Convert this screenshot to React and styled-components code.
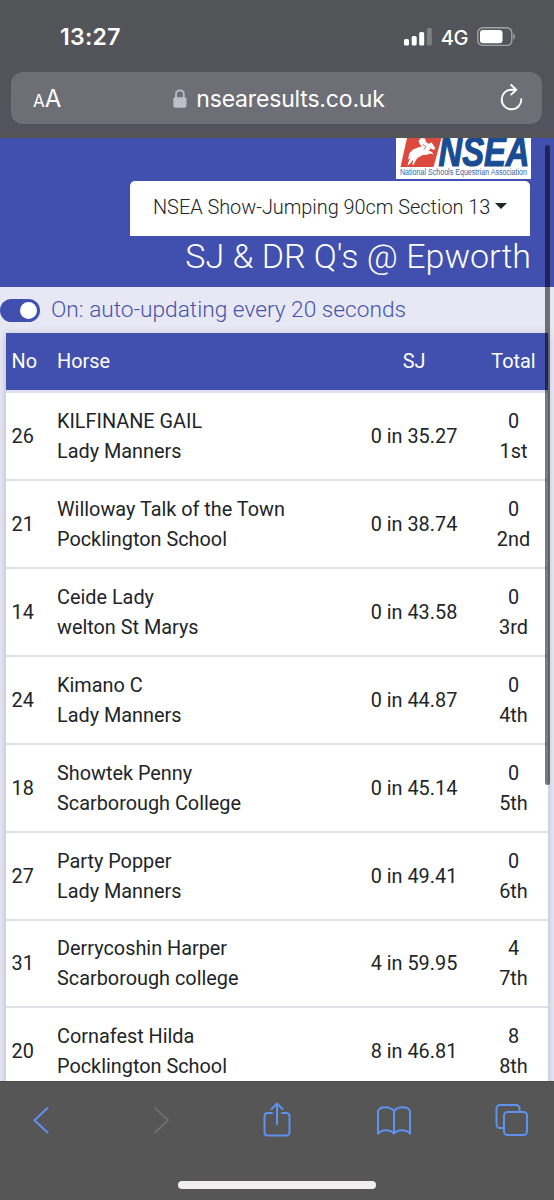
import styled, { createGlobalStyle } from "styled-components";

const GlobalStyle = createGlobalStyle`
  * {
    box-sizing: border-box;
  }
  body {
    margin: 0;
    overflow: hidden;
    font-family: Roboto, sans-serif;
  }
`;

const Phone = styled.div`
  width: 554px;
  height: 1200px;
  display: flex;
  flex-direction: column;
  overflow: hidden;
  background-color: #e8e8f4;
`;

/* browser chrome */
const TopChrome = styled.div`
  flex: none;
  height: 138px;
  padding: 0 12px 0 11px;
  background: linear-gradient(#545559 0%, #535459 55%, #53535f 92%, #555558 97%);
  color: #fff;
  font-family: Inter, sans-serif;
`;

const StatusBar = styled.div`
  height: 72px;
  padding: 2px 26px 0 49px;
  display: flex;
  align-items: center;
  justify-content: space-between;
`;

const Clock = styled.span`
  font-size: 23px;
  font-weight: 600;
  letter-spacing: 0.3px;
`;

const StatusIcons = styled.div`
  display: flex;
  align-items: center;
`;

const Network = styled.span`
  margin: 0 9px;
  padding-top: 1px;
  font-size: 20px;
  font-weight: 500;
  letter-spacing: -0.4px;
`;

const AddressBar = styled.div`
  height: 52px;
  padding: 0 19px 0 22px;
  display: flex;
  align-items: center;
  justify-content: space-between;
  border-radius: 12px;
  background-color: #6e6e76;
`;

const TextSize = styled.span`
  width: 26px;
  padding-top: 1px;
  font-size: 24px;
  white-space: nowrap;

  small {
    font-size: 17px;
  }
`;

const Address = styled.div`
  padding-top: 1px;
  display: flex;
  align-items: center;
  gap: 9px;
  font-size: 23px;
  letter-spacing: -0.18px;
`;

const BottomChrome = styled.div`
  flex: none;
  height: 119px;
  display: flex;
  flex-direction: column;
  align-items: center;
  justify-content: space-between;
  padding-bottom: 11px;
  background-color: #565657;
  border-top: 1px solid #4c4c50;
`;

const Toolbar = styled.div`
  width: 100%;
  height: 76px;
  padding: 0 25px 0 24px;
  display: flex;
  align-items: center;
  justify-content: space-between;
`;

const HomeIndicator = styled.div`
  width: 198px;
  height: 8px;
  border-radius: 4px;
  background-color: #f0eeef;
`;

/* page */
const Page = styled.main`
  position: relative;
  flex: 1;
  min-height: 0;
  overflow: hidden;
`;

const Scrollbar = styled.div`
  position: absolute;
  top: 7px;
  right: 4px;
  width: 5px;
  height: 640px;
  border-radius: 3px;
  background-color: rgba(0, 0, 0, 0.52);
`;

const Header = styled.header`
  height: 149px;
  padding-right: 24px;
  display: flex;
  flex-direction: column;
  align-items: flex-end;
  background-color: #4150ae;
`;

const LogoBox = styled.div`
  width: 135px;
  height: 41px;
  margin-right: -1px;
  background-color: #fff;

  svg {
    display: block;
  }
`;

const SectionSelect = styled.button`
  width: 400px;
  height: 55px;
  margin-top: 2px;
  padding: 0 23px 3px 23px;
  display: flex;
  align-items: center;
  justify-content: space-between;
  border: 0;
  border-radius: 5px 5px 0 0;
  background-color: #fff;
  color: #212529;
  font-family: inherit;
  font-size: 19.9px;
  font-weight: 300;
  letter-spacing: -0.02px;
  white-space: nowrap;
`;

const Caret = styled.span`
  border-top: 6px solid #212529;
  border-left: 6px solid transparent;
  border-right: 6px solid transparent;
  margin-top: -3px;
`;

const Title = styled.h1`
  margin: 0 -1px 0 0;
  font-size: 34px;
  font-weight: 300;
  line-height: 40px;
  color: #fff;
  white-space: nowrap;
`;

const UpdateBar = styled.div`
  height: 46px;
  display: flex;
  align-items: center;
  gap: 11px;
  color: #4654ab;
  font-size: 22.7px;
  font-weight: 300;
  line-height: 26px;
  white-space: nowrap;
`;

const Switch = styled.span`
  width: 40px;
  height: 23px;
  padding: 3px;
  display: flex;
  justify-content: flex-end;
  border-radius: 12px;
  background-color: #4150ae;

  &::after {
    content: "";
    width: 17px;
    height: 17px;
    border-radius: 50%;
    background-color: #fff;
  }
`;

const Results = styled.div`
  margin: 0 6px;
  background-color: #fff;
  color: #212529;
  font-size: 19.85px;
  line-height: 30px;
  box-shadow: 0 2px 8px rgba(40, 40, 90, 0.28);
`;

const Row = styled.div`
  height: 87.93px;
  padding: 2px 0 0 5.5px;
  display: grid;
  grid-template-columns: 45.5px 1fr 130px 69px;
  align-items: center;
  border-bottom: 2px solid #dee2e6;
`;

const HeadRow = styled(Row)`
  height: 60px;
  padding-top: 1px;
  background-color: #4150ae;
  color: #fff;
  border-bottom: 3px solid #dfe1f1;
`;

const Cell = styled.div`
  text-align: ${({ $center }) => ($center ? "center" : "left")};
  white-space: nowrap;
`;

const rows = [
  { no: 26, horse: "KILFINANE GAIL", school: "Lady Manners", sj: "0 in 35.27", total: 0, place: "1st" },
  { no: 21, horse: "Willoway Talk of the Town", school: "Pocklington School", sj: "0 in 38.74", total: 0, place: "2nd" },
  { no: 14, horse: "Ceide Lady", school: "welton St Marys", sj: "0 in 43.58", total: 0, place: "3rd" },
  { no: 24, horse: "Kimano C", school: "Lady Manners", sj: "0 in 44.87", total: 0, place: "4th" },
  { no: 18, horse: "Showtek Penny", school: "Scarborough College", sj: "0 in 45.14", total: 0, place: "5th" },
  { no: 27, horse: "Party Popper", school: "Lady Manners", sj: "0 in 49.41", total: 0, place: "6th" },
  { no: 31, horse: "Derrycoshin Harper", school: "Scarborough college", sj: "4 in 59.95", total: 4, place: "7th" },
  { no: 20, horse: "Cornafest Hilda", school: "Pocklington School", sj: "8 in 46.81", total: 8, place: "8th" },
];

const Signal = () => (
  <svg width="28" height="18" viewBox="0 0 28 18" fill="#fff">
    <rect x="0" y="11" width="5" height="6.5" rx="1.5" />
    <rect x="7.7" y="8" width="5" height="9.5" rx="1.5" />
    <rect x="15.2" y="4" width="5" height="13.5" rx="1.5" />
    <rect x="22.8" y="0" width="5" height="17.5" rx="1.5" opacity="0.25" />
  </svg>
);

const Battery = () => (
  <svg width="39" height="20" viewBox="0 0 39 20">
    <rect x="0.8" y="0.8" width="34" height="17.6" rx="5" fill="none" stroke="#a2a2a7" strokeWidth="1.4" />
    <rect x="3" y="3" width="22.5" height="13.2" rx="3" fill="#fff" />
    <path d="M36.4 6.8c2.2.8 2.2 5 0 5.8z" fill="#a2a2a7" />
  </svg>
);

const Lock = () => (
  <svg width="14" height="20" viewBox="0 0 14 20">
    <rect x="0.3" y="8.3" width="13.2" height="10.5" rx="2" fill="#bebec9" />
    <path d="M3 9V5.2a3.9 3.9 0 0 1 7.8 0V9" fill="none" stroke="#bebec9" strokeWidth="1.8" />
  </svg>
);

const Reload = () => (
  <svg width="24" height="28" viewBox="0 0 24 28" fill="none" stroke="#fff" strokeWidth="1.9" strokeLinecap="round" strokeLinejoin="round">
    <path d="M16.6 5.7H12.3A9.8 9.8 0 1 0 22.3 15.3" />
    <path d="M12.2 1l5 4.7-5 4.9" />
  </svg>
);

const Logo = () => (
  <svg width="135" height="41" viewBox="0 0 135 41">
    <path d="M11 0H45.5L37.5 29H4.5z" fill="#dc4a3f" />
    <path
      d="M22.5 3L25 0L29 0.5L30 4L33 6L34.5 4.5L36 5L39.3 10.3L38 12L35 10.5L32.5 12.5L36 14L37.5 16.5L34 15.5L31 16.8L27 17L22 19.5L20 22L17.5 27L16.3 26.5L17.3 21.5L14.5 25L11.5 27.8L12.8 23L14.5 19.5L12 21.5L13.5 15L17 11.5L22 9.5L25.5 8.5L23.5 5.5z"
      fill="#fff"
    />
    <path d="M26.5 6.5L30 8.5L28 11.5" fill="none" stroke="#dc4a3f" strokeWidth="0.8" />
    <g fill="#194c92" fontFamily="Liberation Sans, sans-serif">
      <text x="42.5" y="28.2" fontSize="42" fontWeight="700" fontStyle="italic" textLength="91" lengthAdjust="spacingAndGlyphs" stroke="#194c92" strokeWidth="1.2">
        NSEA
      </text>
      <text x="4" y="37.4" fontSize="9.2" fill="#3763a3" textLength="127" lengthAdjust="spacingAndGlyphs">
        National Schools Equestrian Association
      </text>
    </g>
  </svg>
);

const ToolIcon = ({ color = "#5f91ee", children }) => (
  <svg width="34" height="38" viewBox="0 0 34 38" fill="none" stroke={color} strokeWidth="2" strokeLinecap="round" strokeLinejoin="round">
    {children}
  </svg>
);

const App = () => {
  return (
    <Phone>
      <GlobalStyle />
      <TopChrome>
        <StatusBar>
          <Clock>13:27</Clock>
          <StatusIcons>
            <Signal />
            <Network>4G</Network>
            <Battery />
          </StatusIcons>
        </StatusBar>
        <AddressBar>
          <TextSize>
            <small>A</small>A
          </TextSize>
          <Address>
            <Lock />
            nsearesults.co.uk
          </Address>
          <Reload />
        </AddressBar>
      </TopChrome>

      <Page>
        <Header>
          <LogoBox>
            <Logo />
          </LogoBox>
          <SectionSelect>
            NSEA Show-Jumping 90cm Section 13
            <Caret />
          </SectionSelect>
          <Title>SJ &amp; DR Q's @ Epworth</Title>
        </Header>
        <UpdateBar>
          <Switch />
          On: auto-updating every 20 seconds
        </UpdateBar>
        <Results>
          <HeadRow>
            <Cell>No</Cell>
            <Cell>Horse</Cell>
            <Cell $center>SJ</Cell>
            <Cell $center>Total</Cell>
          </HeadRow>
          {rows.map((row) => (
            <Row key={row.no}>
              <Cell>{row.no}</Cell>
              <Cell>
                {row.horse}
                <br />
                {row.school}
              </Cell>
              <Cell $center>{row.sj}</Cell>
              <Cell $center>
                {row.total}
                <br />
                {row.place}
              </Cell>
            </Row>
          ))}
        </Results>
        <Scrollbar />
      </Page>

      <BottomChrome>
        <Toolbar>
          <ToolIcon>
            <path d="M23.5 7L10.5 19.2L23.5 31.4" />
          </ToolIcon>
          <ToolIcon color="#6d6d6f">
            <path d="M13 7L26 19.2L13 31.4" />
          </ToolIcon>
          <ToolIcon>
            <path d="M12 12H7.5a3 3 0 0 0-3 3V31.5a3 3 0 0 0 3 3H26.5a3 3 0 0 0 3-3V15a3 3 0 0 0-3-3H22" />
            <path d="M17 23V3M11.5 8L17 2.5L22.5 8" />
          </ToolIcon>
          <ToolIcon>
            <path d="M17 10C13 5 3 5 1 10V32.5C5 28 13 28 17 32.5C21 28 29 28 33 32.5V10C31 5 21 5 17 10V32.5" />
          </ToolIcon>
          <ToolIcon>
            <path d="M9 27H5a3.5 3.5 0 0 1-3.5-3.5V7.5A3.5 3.5 0 0 1 5 4H21a3.5 3.5 0 0 1 3.5 3.5V11" />
            <rect x="9" y="11" width="23" height="23" rx="3.5" />
          </ToolIcon>
        </Toolbar>
        <HomeIndicator />
      </BottomChrome>
    </Phone>
  );
};

export default App;
